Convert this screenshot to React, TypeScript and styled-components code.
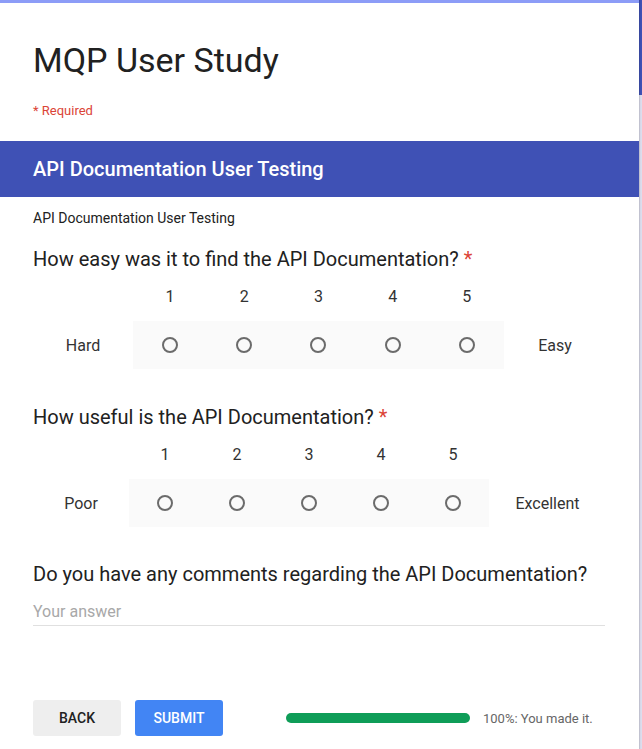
import React from "react";
import styled, { createGlobalStyle } from "styled-components";

const Global = createGlobalStyle`
  html, body { margin: 0; padding: 0; }
  body {
    font-family: Roboto, "Noto Sans", Arial, sans-serif;
    background: linear-gradient(#3f51b5 0, #3f51b5 95px, #dcdded 95px);
    min-height: 749px;
    overflow: hidden;
  }
`;

const Card = styled.div`
  width: 639px;
  min-height: 780px;
  background: #fff;
  border-top: 3px solid #8c9cf7;
  box-shadow: 1px 0 1px rgba(0, 0, 0, 0.12);
  box-sizing: border-box;
`;

const Head = styled.div`
  padding: 37px 33px 22px;
`;

const Title = styled.h1`
  margin: 0;
  font-size: 34px;
  line-height: 40px;
  font-weight: 400;
  color: #212121;
`;

const Required = styled.div`
  margin-top: 23px;
  font-size: 13px;
  line-height: 16px;
  color: #db4437;
`;

const SectionBar = styled.div`
  height: 56px;
  background: #3f51b5;
  color: #fff;
  padding: 0 33px;
  font-size: 20px;
  font-weight: 500;
  line-height: 56px;
`;

const Body = styled.div`
  padding: 11px 33px 0;
`;

const Description = styled.div`
  font-size: 14px;
  line-height: 20px;
  color: #212121;
`;

const Question = styled.div<{ $top: number }>`
  margin-top: ${(p) => p.$top}px;
  font-size: 20px;
  line-height: 24px;
  color: #212121;
`;

const Star = styled.span`
  color: #db4437;
  margin-left: 5px;
`;

const Scale = styled.div<{ $left: number; $col: number; $right: number }>`
  margin-top: 16px;
  display: grid;
  grid-template-columns: ${(p) => `${p.$left}px repeat(5, ${p.$col}px) ${p.$right}px`};
  grid-template-rows: 20px 48px;
  row-gap: 14px;
  font-size: 16px;
  color: #212121;
`;

const NumberCell = styled.div`
  text-align: center;
  line-height: 20px;
  color: #333;
`;

const LabelCell = styled.div`
  display: flex;
  align-items: center;
  justify-content: center;
  color: #333;
`;

const RadioCell = styled.div`
  display: flex;
  align-items: center;
  justify-content: center;
  background: #fafafa;
`;

const Radio = styled.span`
  width: 12px;
  height: 12px;
  border: 2px solid #6b6b6b;
  border-radius: 50%;
`;

const Answer = styled.div`
  margin-top: 16px;
  width: 572px;
  font-size: 16px;
  line-height: 20px;
  padding-bottom: 3px;
  color: #a8a8a8;
  border-bottom: 1px solid #e0e0e0;
`;

const Footer = styled.div`
  margin-top: 74px;
  display: flex;
  align-items: center;
`;

const Button = styled.button<{ $primary?: boolean }>`
  width: 88px;
  height: 36px;
  border: none;
  border-radius: 3px;
  margin-right: 14px;
  font-family: Roboto, Arial, sans-serif;
  font-size: 14px;
  font-weight: 500;
  background: ${(p) => (p.$primary ? "#4285f4" : "#eeeeee")};
  color: ${(p) => (p.$primary ? "#fff" : "#212121")};
  padding: 0;
`;

const Progress = styled.div`
  margin-left: 49px;
  display: flex;
  align-items: center;
`;

const Bar = styled.div`
  width: 184px;
  height: 10px;
  border-radius: 5px;
  background: #0f9d58;
`;

const ProgressText = styled.span`
  margin-left: 13px;
  font-size: 13px;
  color: #666;
`;

type ScaleProps = { low: string; high: string; left: number; col: number; right: number };

function LinearScale({ low, high, left, col, right }: ScaleProps) {
  const nums = [1, 2, 3, 4, 5];
  return (
    <Scale $left={left} $col={col} $right={right}>
      <div />
      {nums.map((n) => (
        <NumberCell key={n}>{n}</NumberCell>
      ))}
      <div />
      <LabelCell>{low}</LabelCell>
      {nums.map((n) => (
        <RadioCell key={n}>
          <Radio />
        </RadioCell>
      ))}
      <LabelCell>{high}</LabelCell>
    </Scale>
  );
}

export default function App() {
  return (
    <>
      <Global />
      <Card>
        <Head>
          <Title>MQP User Study</Title>
          <Required>* Required</Required>
        </Head>
        <SectionBar>API Documentation User Testing</SectionBar>
        <Body>
          <Description>API Documentation User Testing</Description>
          <Question $top={19}>
            How easy was it to find the API Documentation?<Star>*</Star>
          </Question>
          <LinearScale low="Hard" high="Easy" left={100} col={74.2} right={102} />
          <Question $top={36}>
            How useful is the API Documentation?<Star>*</Star>
          </Question>
          <LinearScale low="Poor" high="Excellent" left={96} col={72} right={117} />
          <Question $top={35}>Do you have any comments regarding the API Documentation?</Question>
          <Answer>Your answer</Answer>
          <Footer>
            <Button>BACK</Button>
            <Button $primary>SUBMIT</Button>
            <Progress>
              <Bar />
              <ProgressText>100%: You made it.</ProgressText>
            </Progress>
          </Footer>
        </Body>
      </Card>
    </>
  );
}
